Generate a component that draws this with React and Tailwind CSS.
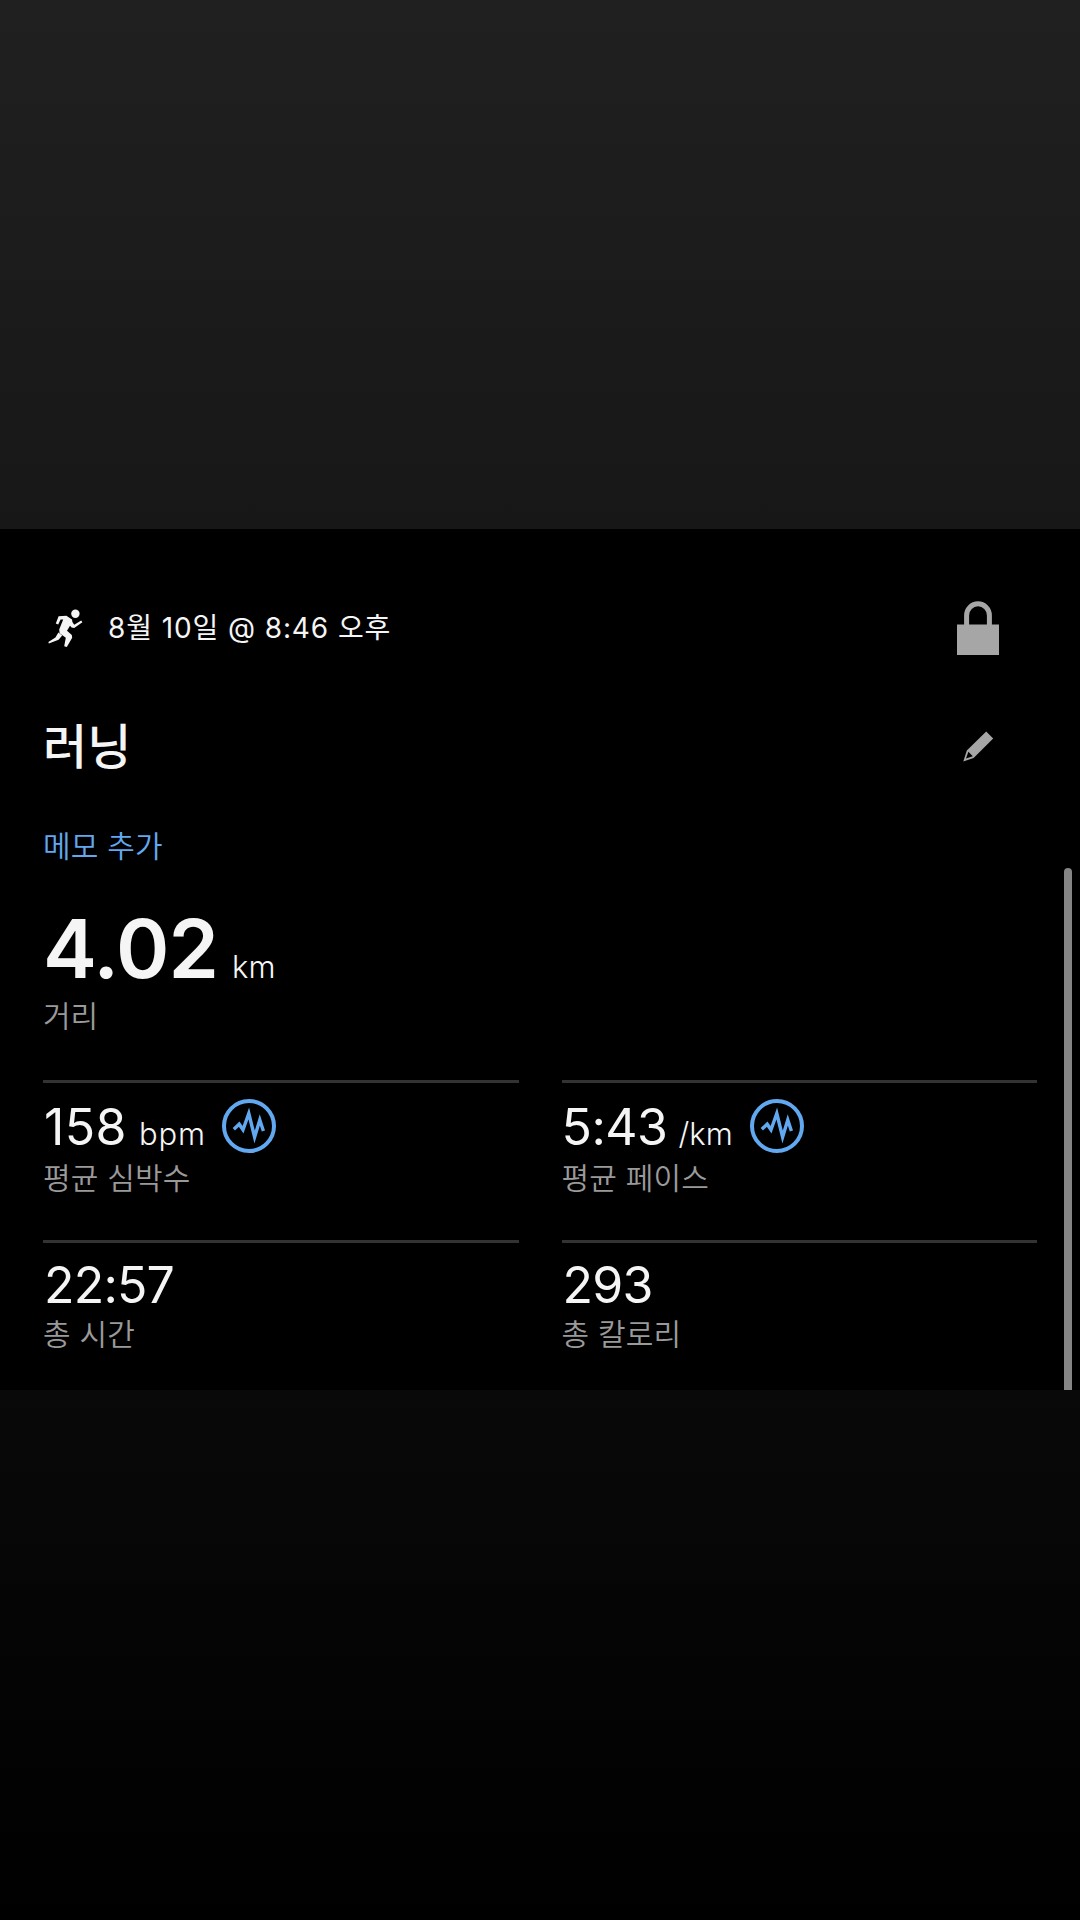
function RunnerIcon() {
  return (
    <svg className="h-[38px] w-[36px]" viewBox="0 0 36 38" fill="#f5f5f5">
      <circle cx="27.4" cy="4.8" r="4.2" />
      <path d="M10.6 7.2L18.4 6.8L24 10.6L24.4 13L26.2 15.8L33.2 11.4L34.4 13.2L26.2 19L23.6 18.6L22 16.8L19 21.8L23.8 26L24.2 28.8L18.8 38L16.2 37.2L17.8 28.8L11.6 24.2L11.2 20.6L15.2 10.6L12.6 10.4L10.2 15.4L7.8 14.6Z" />
      <path d="M10.4 23.6L14.2 26.6L10.6 30.8L0.8 34.4L0.4 33L7.4 28.4Z" />
    </svg>
  );
}

function LockIcon() {
  return (
    <svg className="h-[54px] w-[42px]" viewBox="0 0 42 54">
      <path d="M9.6 26V14.4a11.4 11.6 0 0 1 22.8 0V26" fill="none" stroke="#a6a6a6" strokeWidth="5" />
      <rect y="23.5" width="42" height="30.5" fill="#a6a6a6" />
    </svg>
  );
}

function PencilIcon() {
  return (
    <svg className="h-[31px] w-[31px]" viewBox="0 0 31 31">
      <path
        fill="#a6a6a6"
        fillRule="evenodd"
        d="M23.2 0.5L30.2 7.5L10.6 27L0.3 30.4L3.8 19.6ZM5.4 20.8L3 27.6L9.8 25.2Z"
      />
    </svg>
  );
}

function ChartIcon() {
  return (
    <svg className="h-[54px] w-[54px]" viewBox="0 0 54 54" fill="none" stroke="#62a8f0">
      <circle cx="27" cy="27" r="25" strokeWidth="4" />
      <path d="M11.8 30.2L17.2 25.2L21 30.8L26.8 14.5L32.6 38L37.8 21L41.4 32" strokeWidth="3.4" />
    </svg>
  );
}

const stats = [
  { value: '158', unit: 'bpm', label: '평균 심박수', tracking: 'ml-px tracking-[0.4px]', unitClass: 'tracking-[0.9px]', chart: true },
  { value: '5:43', unit: '/km', label: '평균 페이스', tracking: 'tracking-[-0.5px]', unitClass: '-ml-px mr-px tracking-[0px]', chart: true },
  { value: '22:57', label: '총 시간', tracking: 'ml-px tracking-[-0.8px]' },
  { value: '293', label: '총 칼로리', tracking: 'ml-px tracking-[-0.7px]' },
];

function Stat({ value, unit, label, tracking, unitClass, chart }) {
  return (
    <div className={chart ? 'h-[160px] border-t-[3px] border-[#333]' : 'border-t-[3px] border-[#333]'}>
      <div className={chart ? 'flex h-[54px] items-center mt-4' : 'flex h-[54px] items-center mt-[12px]'}>
        <div className={chart ? 'flex items-baseline pt-[8px] leading-[54px]' : 'flex items-baseline pt-[5px] leading-[54px]'}>
          <span className={`text-[50px] ${tracking}`}>{value}</span>
          {unit && (
            <span className="ml-3 text-[31px] font-[350]">
              <span className={unitClass}>{unit}</span>
            </span>
          )}
        </div>
        {chart && (
          <div className="ml-4">
            <ChartIcon />
          </div>
        )}
      </div>
      <p className="mt-[3px] text-[30px] leading-[44px] font-[350] tracking-[0.2px] text-[#9a9a9a]">{label}</p>
    </div>
  );
}

export default function App() {
  return (
    <div className="flex h-[1920px] w-[1080px] flex-col bg-linear-to-b/srgb from-[#202020] to-black pt-[529px] font-['Inter','Noto_Sans_CJK_KR',sans-serif] text-[#f5f5f5]">
      <main className="flex h-[861px] bg-black">
        <div className="w-[994px] ml-[43px] pt-[69px]">
          <header className="flex h-[60px] items-center justify-between pr-[38px]">
            <div className="flex items-center">
              <div className="ml-[5px]">
                <RunnerIcon />
              </div>
              <span className="ml-[24px] text-[28px] leading-[60px] font-[370] tracking-[0.9px]">8월 10일 @ 8:46 오후</span>
            </div>
            <LockIcon />
          </header>

          <div className="mt-[58px] flex h-[60px] items-center justify-between pr-[43px]">
            <h1 className="pt-[2px] text-[48px] leading-[60px] font-medium">러닝</h1>
            <PencilIcon />
          </div>

          <a href="#" className="mt-[48px] block h-[44px] text-[30px] leading-[44px] font-[350] tracking-[0.2px] text-[#62a8f0]">
            메모 추가
          </a>

          <div className="mt-[37px] flex h-[88px] items-baseline leading-[88px]">
            <span className="text-[81px] font-semibold tracking-[-0.9px]">4.02</span>
            <span className="ml-[14px] text-[31px] font-[350]">km</span>
          </div>
          <p className="mt-px h-[44px] text-[30px] leading-[44px] font-[350] text-[#9a9a9a]">거리</p>

          <section className="mt-[42px] grid grid-cols-2 gap-x-[43px]">
            {stats.map((stat) => (
              <Stat key={stat.label} {...stat} />
            ))}
          </section>
        </div>

        {/* scroll indicator */}
        <div className="mt-[339px] ml-[27px] w-2 rounded-t-full bg-[#858585]" />
      </main>
    </div>
  );
}
